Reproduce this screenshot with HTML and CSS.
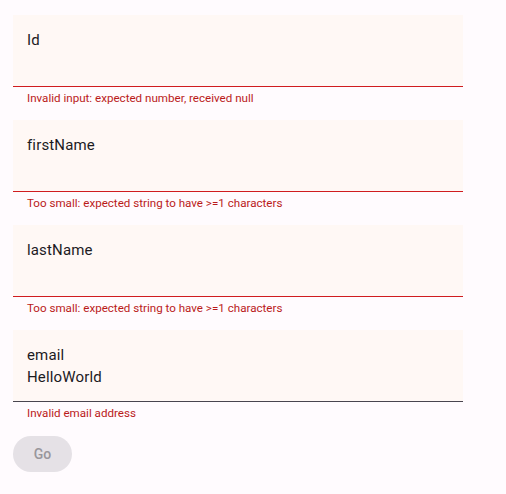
FILE: index.html
```html
<!DOCTYPE html>
<html>
<head>
<meta charset="utf-8">
<link rel="stylesheet" href="styles.css">
</head>
<body>
<form class="form">
  <div class="group">
    <div class="field error">
      <div class="label">Id</div>
      <div class="value"></div>
    </div>
    <div class="helper">Invalid input: expected number, received null</div>
  </div>
  <div class="group">
    <div class="field error">
      <div class="label">firstName</div>
      <div class="value"></div>
    </div>
    <div class="helper">Too small: expected string to have &gt;=1 characters</div>
  </div>
  <div class="group">
    <div class="field error">
      <div class="label">lastName</div>
      <div class="value"></div>
    </div>
    <div class="helper">Too small: expected string to have &gt;=1 characters</div>
  </div>
  <div class="group">
    <div class="field">
      <div class="label">email</div>
      <div class="value">HelloWorld</div>
    </div>
    <div class="helper">Invalid email address</div>
  </div>
  <button type="button" class="btn" disabled>Go</button>
</form>
</body>
</html>
```
FILE: styles.css
```css
html, body {
  margin: 0;
  padding: 0;
  background: #fffbfe;
}
body {
  font-family: Roboto, "Liberation Sans", sans-serif;
  color: #1c1b1f;
}
.form {
  width: 450px;
  padding: 15px 13px;
  display: flex;
  flex-direction: column;
}
.group {
  display: flex;
  flex-direction: column;
  height: 105px;
}
.field {
  background: #fff8f5;
  border-bottom: 1px solid #49454f;
  padding: 14px 14px 0 14px;
  box-sizing: content-box;
  height: 57px;
  display: flex;
  flex-direction: column;
  gap: 2px;
}
.field.error {
  border-bottom-color: #d01c1f;
}
.label, .value {
  font-size: 15px;
  line-height: 20px;
  height: 20px;
  letter-spacing: 0.15px;
}
.label {
  margin-top: 1px;
}
.helper {
  font-size: 11.6px;
  line-height: 16px;
  color: #ba1a1a;
  padding: 3px 14px 0 14px;
  letter-spacing: 0;
}
.btn {
  align-self: flex-start;
  width: 59px;
  height: 36px;
  border: none;
  border-radius: 18px;
  background: #e5e1e6;
  color: #99969c;
  font-family: Roboto, "Liberation Sans", sans-serif;
  font-size: 14px;
  font-weight: 500;
  letter-spacing: 0.1px;
  padding: 0;
  margin-top: 1px;
}
```
